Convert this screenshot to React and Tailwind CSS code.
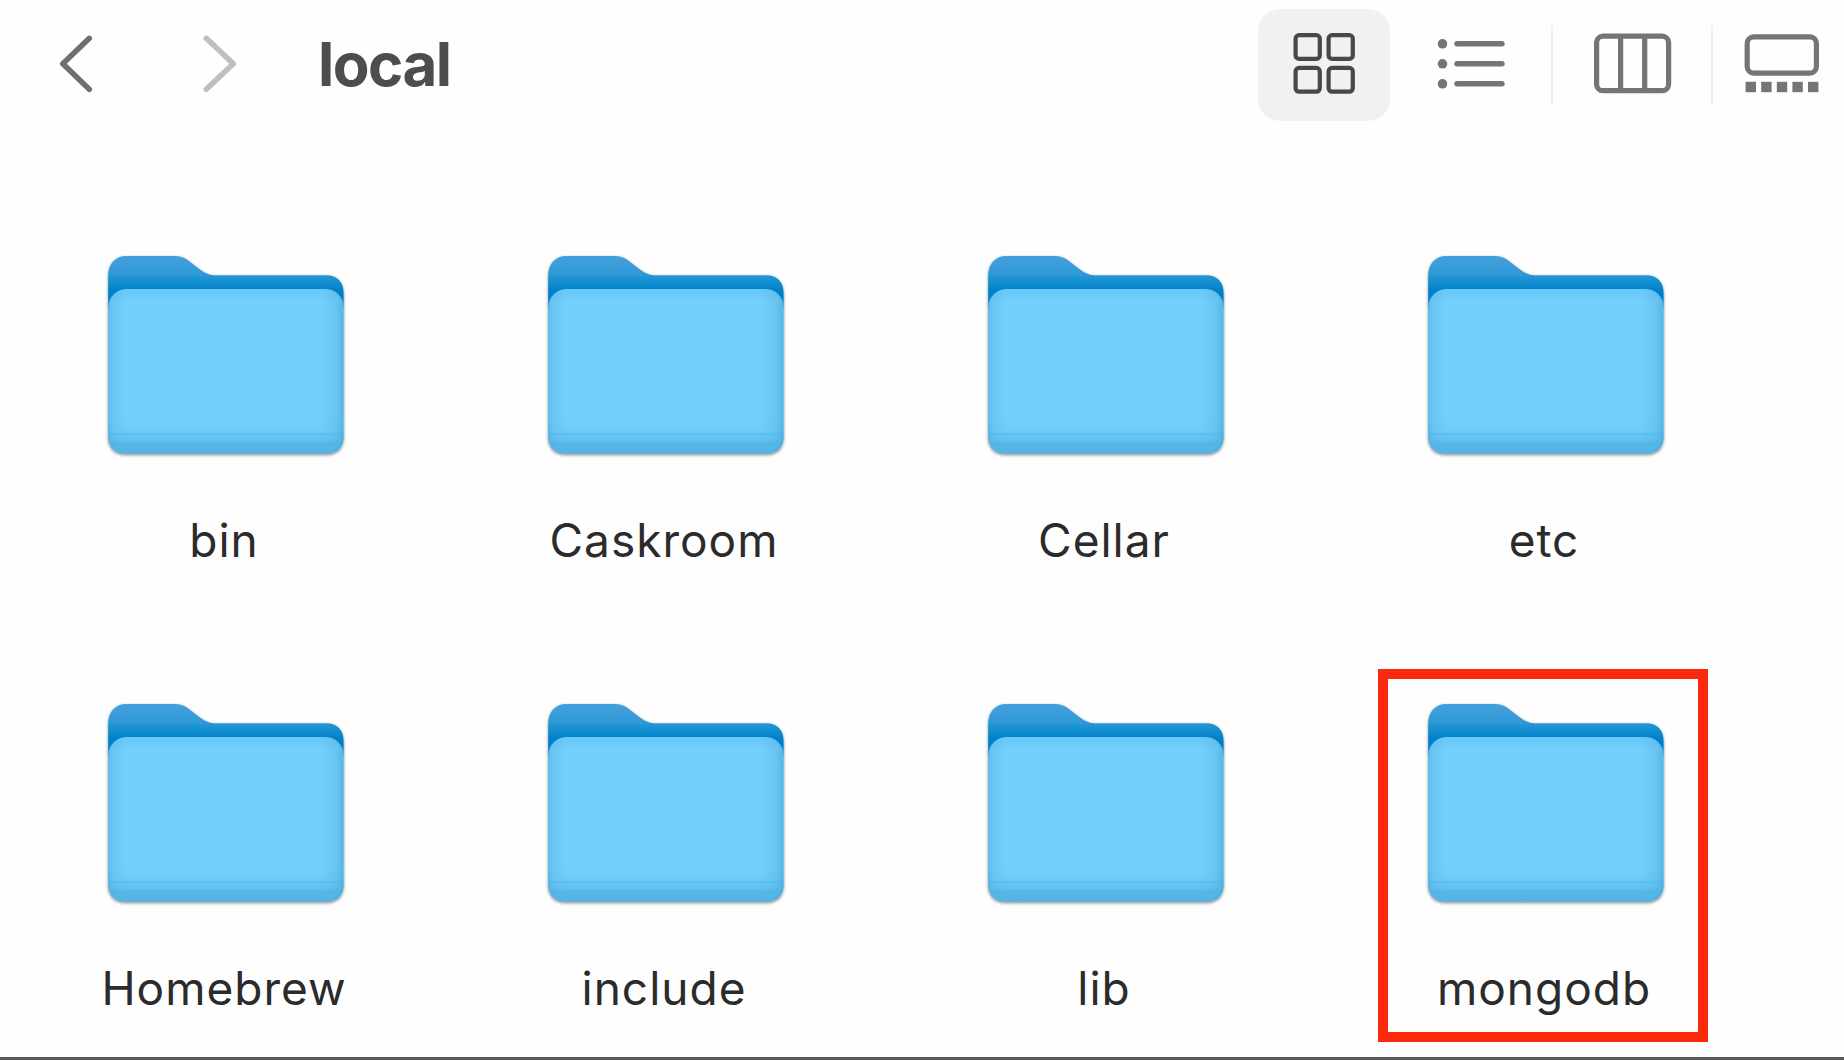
import React from "react";

const rows = [
  ["bin", "Caskroom", "Cellar", "etc"],
  ["Homebrew", "include", "lib", "mongodb"],
];

function Folder({ id }) {
  const back = `${id}-back`;
  const front = `${id}-front`;
  const sides = `${id}-sides`;
  const shadow = `${id}-shadow`;
  return (
    <svg className="ml-[86px] block h-[230px] w-[270px]" viewBox="0 0 270 230">
      <defs>
        <linearGradient id={back} gradientUnits="userSpaceOnUse" x1="0" y1="16" x2="0" y2="52">
          <stop offset="0" stopColor="#429fda" />
          <stop offset="0.45" stopColor="#359bd8" />
          <stop offset="0.8" stopColor="#088acd" />
          <stop offset="1" stopColor="#0580c8" />
        </linearGradient>
        <linearGradient id={front} gradientUnits="userSpaceOnUse" x1="0" y1="49" x2="0" y2="213">
          <stop offset="0" stopColor="#6ac8f6" />
          <stop offset="0.09" stopColor="#74cffc" />
          <stop offset="0.78" stopColor="#74cffc" />
          <stop offset="0.875" stopColor="#6ccaf8" />
          <stop offset="0.882" stopColor="#5fbfee" />
          <stop offset="0.895" stopColor="#67c5f4" />
          <stop offset="0.925" stopColor="#62c1f1" />
          <stop offset="0.935" stopColor="#59baea" />
          <stop offset="1" stopColor="#51b3e4" />
        </linearGradient>
        <linearGradient id={sides} x1="0" y1="0" x2="1" y2="0">
          <stop offset="0" stopColor="#3fa3d3" stopOpacity="0.5" />
          <stop offset="0.02" stopColor="#4fb0de" stopOpacity="0.3" />
          <stop offset="0.08" stopColor="#5ab8e8" stopOpacity="0" />
          <stop offset="0.9" stopColor="#5ab8e8" stopOpacity="0" />
          <stop offset="0.97" stopColor="#4fb0de" stopOpacity="0.35" />
          <stop offset="1" stopColor="#3fa3d3" stopOpacity="0.6" />
        </linearGradient>
        <filter id={shadow} x="-10%" y="-10%" width="120%" height="120%">
          <feDropShadow dx="0" dy="1.5" stdDeviation="1.8" floodColor="#22303a" floodOpacity="0.6" />
        </filter>
      </defs>
      <g filter={`url(#${shadow})`}>
        <path
          d="M18.2 67V36C18.2 24 25 16 36 16H83C90 16 94 17 99 21L110 29.5C116 34 120 35.3 128 35.3H237C247 35.3 253.6 42 253.6 53V67Z"
          fill={`url(#${back})`}
        />
        <path
          d="M18.2 66C20 55 27 49 38 49H234C245 49 252 55 253.6 66V197C253.6 207 247 213.5 237 213.5H35C25 213.5 18.2 207 18.2 197Z"
          fill={`url(#${front})`}
        />
      </g>
      <path
        d="M18.2 66C20 55 27 49 38 49H234C245 49 252 55 253.6 66V197C253.6 207 247 213.5 237 213.5H35C25 213.5 18.2 207 18.2 197Z"
        fill={`url(#${sides})`}
      />
    </svg>
  );
}

function Item({ name }) {
  return (
    <div className="relative h-[448px] w-[440px]">
      <Folder id={name} />
      <div className="mt-[40px] text-center text-[46px] leading-[60px] tracking-[1px] text-[#2b2b2b]">
        {name}
      </div>
      {name === "mongodb" && (
        <div className="absolute -top-[19px] left-[54px] h-[373px] w-[330px] border-[10px] border-[#fb2a0d]" />
      )}
    </div>
  );
}

function Toolbar() {
  return (
    <header className="flex h-[127px] shrink-0 items-center">
      <svg className="ml-[54px] h-[64px] w-[44px]" viewBox="54 31 44 64" fill="none" stroke="#6f6f6f" strokeWidth="5.5" strokeLinecap="round" strokeLinejoin="round">
        <path d="M89.3 37.3L62.8 62.7L89.3 88.3" />
      </svg>
      <svg className="ml-[100px] h-[64px] w-[44px]" viewBox="198 31 44 64" fill="none" stroke="#bfbfbf" strokeWidth="5.5" strokeLinecap="round" strokeLinejoin="round">
        <path d="M206.3 37.3L233.3 62.7L206.3 88.3" />
      </svg>
      <h1 className="ml-[76px] text-[60px] leading-[76px] font-bold tracking-[-1.5px] text-[#4d4d4d]">
        local
      </h1>
      <nav className="ml-auto flex h-full items-center">
        <div className="mt-[3px] flex h-[112px] w-[132px] items-center justify-center rounded-[22px] bg-[#f1f1f1]">
          <svg className="h-[64px] w-[64px]" viewBox="1292 33.3 64 64" fill="none" stroke="#484848" strokeWidth="4.2">
            <rect x="1295.6" y="35.4" width="24.2" height="23.8" rx="3.5" />
            <rect x="1328.6" y="35.4" width="24.2" height="23.8" rx="3.5" />
            <rect x="1295.6" y="68.2" width="24.2" height="23.8" rx="3.5" />
            <rect x="1328.6" y="68.2" width="24.2" height="23.8" rx="3.5" />
          </svg>
        </div>
        <svg className="ml-[44px] h-[64px] w-[76px]" viewBox="1434 31.5 76 64" fill="none" stroke="#757575" strokeWidth="5.4" strokeLinecap="round">
          <path d="M1457 43.3H1502M1457 63.3H1502M1457 83.3H1502" />
          <g fill="#757575" stroke="none">
            <circle cx="1442.5" cy="43.3" r="4.8" />
            <circle cx="1442.5" cy="63.3" r="4.8" />
            <circle cx="1442.5" cy="83.3" r="4.8" />
          </g>
        </svg>
        <div className="ml-[41px] mt-[5px] h-[80px] w-[2px] bg-[#efefef]" />
        <svg className="ml-[37px] h-[64px] w-[84px]" viewBox="1590 31.5 84 64" fill="none" stroke="#757575" strokeWidth="5.2">
          <rect x="1596.6" y="35.6" width="72" height="54.6" rx="6.5" />
          <path d="M1620.6 36V90M1644.7 36V90" />
        </svg>
        <div className="ml-[37px] mt-[5px] h-[80px] w-[2px] bg-[#efefef]" />
        <svg className="ml-[27px] mr-[20px] h-[64px] w-[84px]" viewBox="1740 31.5 84 64" fill="none" stroke="#757575" strokeWidth="5.2">
          <rect x="1747.2" y="36.4" width="69.2" height="36.2" rx="6.5" />
          <g fill="#757575" stroke="none">
            <rect x="1745.6" y="81.3" width="10.4" height="10.4" />
            <rect x="1761.2" y="81.3" width="10.4" height="10.4" />
            <rect x="1776.8" y="81.3" width="10.4" height="10.4" />
            <rect x="1792.4" y="81.3" width="10.4" height="10.4" />
            <rect x="1808" y="81.3" width="10.4" height="10.4" />
          </g>
        </svg>
      </nav>
    </header>
  );
}

export default function App() {
  return (
    <div className="flex h-[1060px] w-[1844px] flex-col overflow-hidden border-b-[3px] border-[#5a5a5a] bg-[#fefefe] font-['Inter',sans-serif]">
      <Toolbar />
      <main className="mt-[113px] ml-[4px]">
        {rows.map((row) => (
          <div key={row[0]} className="flex">
            {row.map((name) => (
              <Item key={name} name={name} />
            ))}
          </div>
        ))}
      </main>
    </div>
  );
}
